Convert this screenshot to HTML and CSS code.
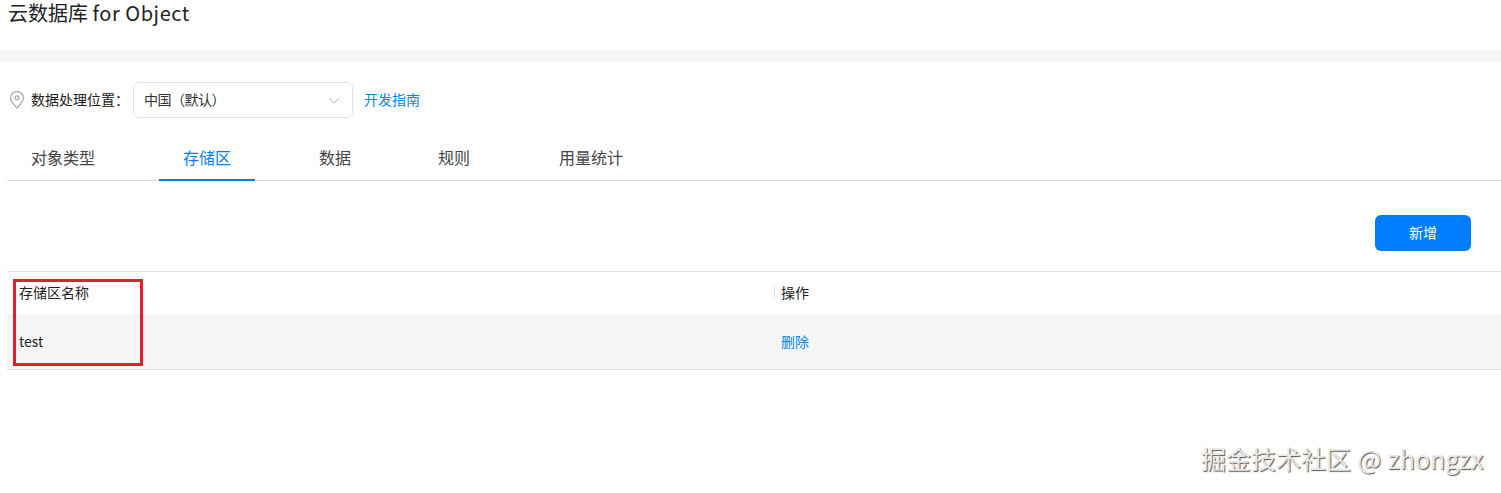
FILE: index.html
```html
<!DOCTYPE html>
<html lang="zh-CN">
<head>
  <meta charset="UTF-8" />
  <title>云数据库 for Object</title>
  <link rel="stylesheet" href="styles.css">
</head>
<body>
  <h1 class="title">云数据库 <span class="title-latin">for Object</span></h1>
  <div class="band"></div>

  <div class="location-row">
    <svg class="pin" width="16" height="18" viewBox="0 0 16 18" fill="none" stroke="#a3a3a3" stroke-width="1.2">
      <path d="M8 17C5 13.6 1.6 10.4 1.6 6.9a6.4 6.2 0 0 1 12.8 0C14.4 10.4 11 13.6 8 17z" />
      <circle cx="8" cy="6.8" r="1.9" />
    </svg>
    <span class="location-label">数据处理位置：</span>
    <div class="select">
      <span class="select-value">中国（默认）</span>
      <svg width="12" height="7" viewBox="0 0 12 7" fill="none" stroke="#b8b8b8" stroke-width="1">
        <path d="M1 1l5 5 5-5" />
      </svg>
    </div>
    <a class="link guide">开发指南</a>
  </div>

  <div class="tabs">
    <div class="tab tab-objects">对象类型</div>
    <div class="tab tab-active">存储区</div>
    <div class="tab tab-data">数据</div>
    <div class="tab tab-rules">规则</div>
    <div class="tab tab-usage">用量统计</div>
  </div>

  <div class="toolbar">
    <button class="add-button">新增</button>
  </div>

  <div class="table">
    <div class="table-head">
      <div class="col-name">存储区名称</div>
      <div class="col-action"><span class="divider"></span>操作</div>
    </div>
    <div class="table-row">
      <div class="col-name cell-name">test</div>
      <div class="col-action"><a class="link">删除</a></div>
    </div>
  </div>

  <div class="highlight-box"></div>
  <div class="watermark">掘金技术社区 @ zhongzx</div>
</body>
</html>
```

FILE: styles.css
```css
* {
  box-sizing: border-box;
}

body {
  margin: 0;
  height: 493px;
  overflow: hidden;
  position: relative;
  background: #ffffff;
  color: #222222;
  font-family: "Noto Sans CJK SC", "Noto Sans", sans-serif;
}

.title {
  margin: 0;
  padding-left: 8px;
  height: 50px;
  font-size: 20px;
  font-weight: 400;
  line-height: 25px;
}

.title-latin {
  letter-spacing: 0.55px;
}

.band {
  height: 12px;
  background: #f7f7f7;
}

.location-row {
  display: flex;
  align-items: center;
  height: 36px;
  margin-top: 20px;
  padding-left: 9px;
  font-size: 14px;
  line-height: 20px;
}

.pin {
  margin-right: 6px;
}

.location-label,
.select-value,
.guide {
  padding-bottom: 2px;
}

.location-label {
  width: 102px;
}

.select {
  display: flex;
  align-items: center;
  justify-content: space-between;
  width: 220px;
  height: 36px;
  padding: 0 12px 0 10px;
  border: 1px solid #e2e2e2;
  border-radius: 6px;
  color: #333333;
}

.select-value {
  letter-spacing: -0.5px;
}

.link {
  color: #0a84ea;
  font-size: 14px;
}

.guide {
  margin-left: 11px;
}

.tabs {
  display: flex;
  height: 44px;
  margin: 19px 0 0 7px;
  width: 1494px;
  border-bottom: 1px solid #dcdcdc;
  font-size: 16px;
  color: #444444;
}

.tab {
  height: 44px;
  line-height: 41px;
  text-align: center;
}

.tab-objects {
  width: 112px;
  margin-right: 40px;
}

.tab-active {
  width: 96px;
  color: #0a7fe0;
  border-bottom: 2px solid #0a7fe0;
}

.tab-data {
  width: 32px;
  margin-left: 64px;
}

.tab-rules {
  width: 32px;
  margin-left: 87px;
}

.tab-usage {
  width: 64px;
  margin-left: 89px;
}

.toolbar {
  display: flex;
  justify-content: flex-end;
  padding: 34px 30px 20px 0;
}

.add-button {
  width: 96px;
  height: 36px;
  padding: 0 0 3px;
  border: 0;
  border-radius: 6px;
  background: #007dff;
  color: #ffffff;
  font-family: inherit;
  font-size: 14px;
}

.table {
  margin-left: 7px;
  width: 1494px;
  font-size: 14px;
  border-top: 1px solid #e2e2e2;
  border-bottom: 1px solid #dedede;
}

.table-head,
.table-row {
  display: flex;
  align-items: center;
}

.table-head {
  height: 42px;
  padding-bottom: 3px;
}

.table-row {
  height: 55px;
  padding-bottom: 1px;
  background: #f6f6f6;
}

.col-name {
  width: 767px;
  padding-left: 12px;
}

.col-action {
  display: flex;
  align-items: center;
}

.divider {
  width: 1px;
  height: 14px;
  margin-right: 6px;
  background: #dddddd;
}

.table-row .col-action {
  padding-left: 7px;
}

.highlight-box {
  position: absolute;
  left: 13px;
  top: 279px;
  width: 130px;
  height: 87px;
  border: 3px solid #e0202c;
}

.watermark {
  position: absolute;
  left: 1201px;
  top: 441px;
  font-size: 25px;
  line-height: 34px;
  word-spacing: 1px;
  white-space: nowrap;
  color: #e8e8e8;
  text-shadow: 1px 1px 1px #555555;
}
```
